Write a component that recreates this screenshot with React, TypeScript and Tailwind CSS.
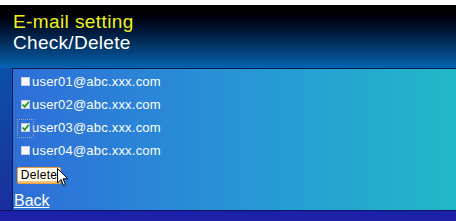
import React from "react";

const users = [
  { email: "user01@abc.xxx.com", checked: false, focus: false },
  { email: "user02@abc.xxx.com", checked: true, focus: false },
  { email: "user03@abc.xxx.com", checked: true, focus: true },
  { email: "user04@abc.xxx.com", checked: false, focus: false },
];

function Box({ checked, focus }: { checked: boolean; focus: boolean }) {
  return (
    <span className="relative inline-flex w-[9px] h-[9px] shrink-0 bg-[#f4f4f8] border border-[#c8ccd8]">
      {checked && (
        <svg viewBox="0 0 9 9" className="absolute -left-px -top-px w-[9px] h-[9px]">
          <path d="M1.5 4.5 L3.7 6.8 L7.8 1.8" stroke="#1f9a2a" strokeWidth="1.8" fill="none" />
        </svg>
      )}
      {focus && (
        <span className="absolute -left-[5px] -top-[5px] w-[17px] h-[19px] border border-dotted border-[#9aa4b8]" />
      )}
    </span>
  );
}

export default function App() {
  return (
    <div
      className="w-[456px] h-[221px] overflow-hidden bg-white relative"
      style={{ fontFamily: '"Liberation Sans", Arial, sans-serif' }}
    >
      <div className="h-[5px] bg-white" />
      <div className="h-[63px] bg-gradient-to-b from-black via-[#02234a] to-[#0664b4] pl-[13px] pt-[6px]">
        <div className="text-[19px] leading-[21px] text-[#f0f020] tracking-[0.4px]">E-mail setting</div>
        <div className="text-[19px] leading-[21px] text-white tracking-[0.3px]">Check/Delete</div>
      </div>
      <div className="h-[153px] bg-gradient-to-b from-[#0a50a8] to-[#1a2a9c] flex flex-col">
        <div className="ml-[12px] h-[142px] border-t border-l border-[#0a1a48] bg-gradient-to-r from-[#2e6ed8] via-[#2894d6] to-[#22b8c8] flex flex-col pt-[1px]">
          {users.map((u) => (
            <div key={u.email} className="h-[23px] flex items-center pl-[8px] gap-[2px]">
              <Box checked={u.checked} focus={u.focus} />
              <span className="text-[13px] text-white leading-none tracking-[0.2px]">{u.email}</span>
            </div>
          ))}
          <div className="ml-[4px] relative w-fit">
            <button className="h-[17px] w-[44px] text-[12px] leading-none text-black bg-[#fffbea] border border-[#e8a040] rounded-[2px] shadow-[inset_0_-2px_0_#f6c070] tracking-[0.3px]">
              Delete
            </button>
            <svg viewBox="0 0 12 19" className="absolute left-[40px] top-[6px] w-[12px] h-[19px]">
              <path d="M0.5 0.5 L0.5 15 L4 11.5 L6.5 17.5 L8.5 16.6 L6 10.8 L10.8 10.8 Z" fill="white" stroke="black" strokeWidth="1" />
            </svg>
          </div>
          <a className="mt-[5px] ml-[1px] text-[16px] leading-[19px] text-white underline w-fit">Back</a>
        </div>
        <div className="flex-1 border-t border-[#101060] bg-[#1b22a8]" />
      </div>
    </div>
  );
}
